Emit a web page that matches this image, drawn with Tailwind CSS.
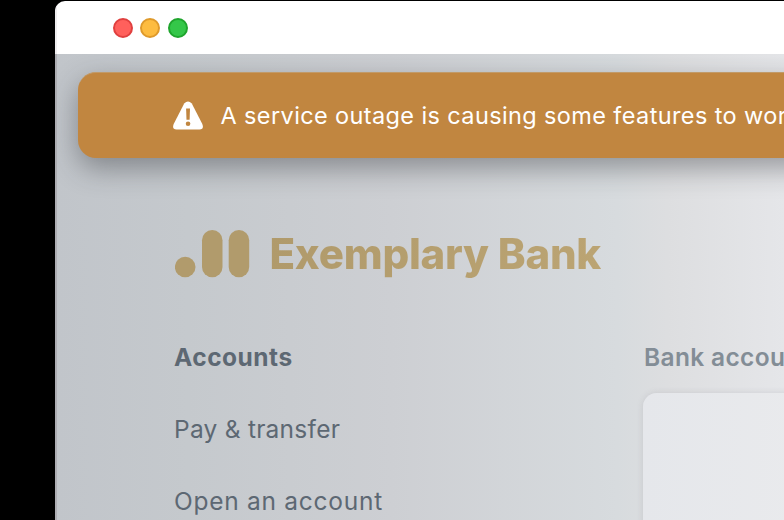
<!DOCTYPE html>
<html lang="en">
<head>
<meta charset="utf-8">
<title>Exemplary Bank</title>
<script src="https://cdn.jsdelivr.net/npm/@tailwindcss/browser@4"></script>
</head>
<body class="h-[520px] w-[784px] overflow-hidden bg-black pt-px pl-[55px] font-['Inter',sans-serif]">
<div class="flex h-[519px] w-[729px] flex-col overflow-hidden rounded-tl-[10px] bg-white">
  <header class="flex h-[53px] shrink-0 items-center gap-[7.7px] border-l-2 border-[#efedef] pl-[55.5px]">
    <span class="size-5 rounded-full border-2 border-[#e0403f] bg-[#ff605c]"></span>
    <span class="size-5 rounded-full border-2 border-[#df9a2b] bg-[#fdbc40]"></span>
    <span class="size-5 rounded-full border-2 border-[#1fa52d] bg-[#34c749]"></span>
  </header>
  <main class="flex min-h-0 flex-1 flex-col overflow-hidden border-l-2 border-[#adadb2] bg-[linear-gradient(to_right,#c1c5ca_0%,#c5c9cd_18%,#cdcfd3_46%,#d7dbde_77%,#dddee0_84%,#e5e6e9_100%)] pt-[18px]">
    <div role="alert" class="ml-[21px] flex h-[86px] w-[800px] shrink-0 items-center rounded-[18px] border-t border-[#c29a68] bg-[#c18640] pl-[94px] text-white shadow-[0_10px_28px_rgba(40,43,48,0.42)]">
      <svg class="h-[29px] w-8 shrink-0" viewBox="0 0 32 29">
        <path d="M12.2 2.6Q16 -1.4 19.8 2.6L30.3 23Q32.3 28.3 27.5 28.5H4.5Q-.3 28.3 1.7 23Z" fill="#fff"/>
        <path d="M14.1 7.4h3.9l-.4 11.4h-3.1Z" fill="#c18640"/>
        <circle cx="16.05" cy="22.8" r="2.3" fill="#c18640"/>
      </svg>
      <p class="ml-[16.5px] text-[23.5px] font-normal tracking-[0.38px] whitespace-nowrap">A service outage is causing some features to wor</p>
    </div>
    <div class="mt-[72px] ml-[118px] flex h-12 shrink-0 items-center text-[#b19b6c]">
      <svg class="h-12 w-[75px] shrink-0" viewBox="0 0 75 48" fill="currentColor">
        <circle cx="10.2" cy="37" r="10.3"/>
        <rect x="27" y="0" width="20.5" height="47.3" rx="10.25"/>
        <rect x="53.7" y="0" width="20.5" height="47.3" rx="10.25"/>
      </svg>
      <span class="ml-[19.5px] bg-linear-to-r from-[#b09a6b] to-[#bba473] bg-clip-text text-[42px] leading-[56px] font-extrabold tracking-[-0.25px] whitespace-nowrap text-transparent">Exemplary Bank</span>
    </div>
    <div class="mt-[61px] ml-[117px] flex shrink-0 gap-0">
      <nav class="flex w-[470px] shrink-0 flex-col gap-9 text-[24.5px] leading-9 text-[#5d6873]">
        <a class="font-bold"><span class="tracking-[0.5px]">Accounts</span></a>
        <a><span class="font-normal tracking-[0.25px]">Pay &amp; transfer</span></a>
        <a><span class="font-normal tracking-[0.73px]">Open an account</span></a>
      </nav>
      <section class="shrink-0">
        <h2 class="text-[24.5px] leading-9 font-semibold tracking-[0.35px] whitespace-nowrap text-[#838d96]">Bank accou</h2>
        <div class="mt-[18px] -ml-px h-[200px] w-[300px] rounded-tl-[14px] bg-linear-to-r from-[#e5e7eb] to-[#ededee] shadow-[0_0_6px_rgba(120,120,130,0.2)]"></div>
      </section>
    </div>
  </main>
</div>
</body>
</html>
